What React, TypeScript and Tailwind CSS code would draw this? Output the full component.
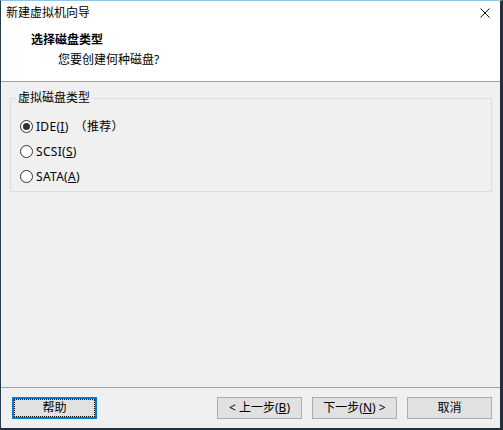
import React from 'react'

const font = "font-['Noto_Sans','Noto_Sans_CJK_SC',sans-serif]"

function Radio({ checked, children }: { checked?: boolean; children: React.ReactNode }) {
  return (
    <div className="flex h-[25px] items-center pl-[4px]">
      <span className="flex h-[13px] w-[13px] items-center justify-center rounded-full border border-[#333] bg-white">
        {checked && <span className="h-[7px] w-[7px] rounded-full bg-[#333]" />}
      </span>
      <span className="ml-[3px] text-[12px] leading-[16px] tracking-[0.3px] text-black">{children}</span>
    </div>
  )
}

function Btn({ children, focused, className }: { children: React.ReactNode; focused?: boolean; className?: string }) {
  return (
    <button
      className={
        'flex h-[22px] w-[85px] items-center justify-center bg-[#e1e1e1] text-[12px] leading-[16px] text-black ' +
        (focused
          ? 'border-2 border-[#0078d7] outline-1 outline-dotted outline-black outline-offset-[-3px] '
          : 'border border-[#adadad] ') +
        (className ?? '')
      }
    >
      {children}
    </button>
  )
}

export default function App() {
  return (
    <div
      className={`${font} flex h-[430px] w-[503px] flex-col border-t border-r-[3px] border-b-2 border-l border-t-[#8ec5e5] border-r-[#22303e] border-b-[#22303e] border-l-[#2b3a4a] bg-[#f0f0f0]`}
    >
      {/* title bar */}
      <div className="flex h-[24px] items-center justify-between bg-white pl-[5px] pr-[8px]">
        <span className="text-[12px] leading-[16px] text-black">新建虚拟机向导</span>
        <svg width="10" height="10" viewBox="0 0 10 10" className="mr-[2px]">
          <path d="M0.5 0.5L9.5 9.5M9.5 0.5L0.5 9.5" stroke="#111" strokeWidth="1" />
        </svg>
      </div>

      {/* header */}
      <div className="h-[57px] border-b border-[#a0a0a0] bg-white pt-[7px]">
        <div className="pl-[30px] text-[12px] font-bold leading-[16px] text-black">选择磁盘类型</div>
        <div className="mt-[4px] pl-[57px] text-[12px] leading-[16px] text-black">您要创建何种磁盘?</div>
      </div>

      {/* body */}
      <div className="flex-1 pl-[9px] pt-[9px]">
        <fieldset className="w-[482px] border border-[#dcdcdc] px-[5px] pb-[2px]">
          <legend className="px-[2px] text-[12px] leading-[14px] text-black">虚拟磁盘类型</legend>
          <div className="pt-[9px]">
            <Radio checked>
              IDE(<u>I</u>)<span className="ml-[6px]">（推荐）</span>
            </Radio>
            <Radio>
              SCSI(<u>S</u>)
            </Radio>
            <Radio>
              SATA(<u>A</u>)
            </Radio>
          </div>
        </fieldset>
      </div>

      {/* footer */}
      <div className="flex h-[41px] border-t border-[#a0a0a0] pl-[11px] pr-[8px] pt-[9px]">
        <Btn focused>帮助</Btn>
        <div className="flex-1" />
        <Btn>&lt; 上一步(<u>B</u>)</Btn>
        <Btn className="ml-[10px]">
          下一步(<u>N</u>) &gt;
        </Btn>
        <Btn className="ml-[10px]">取消</Btn>
      </div>
    </div>
  )
}
